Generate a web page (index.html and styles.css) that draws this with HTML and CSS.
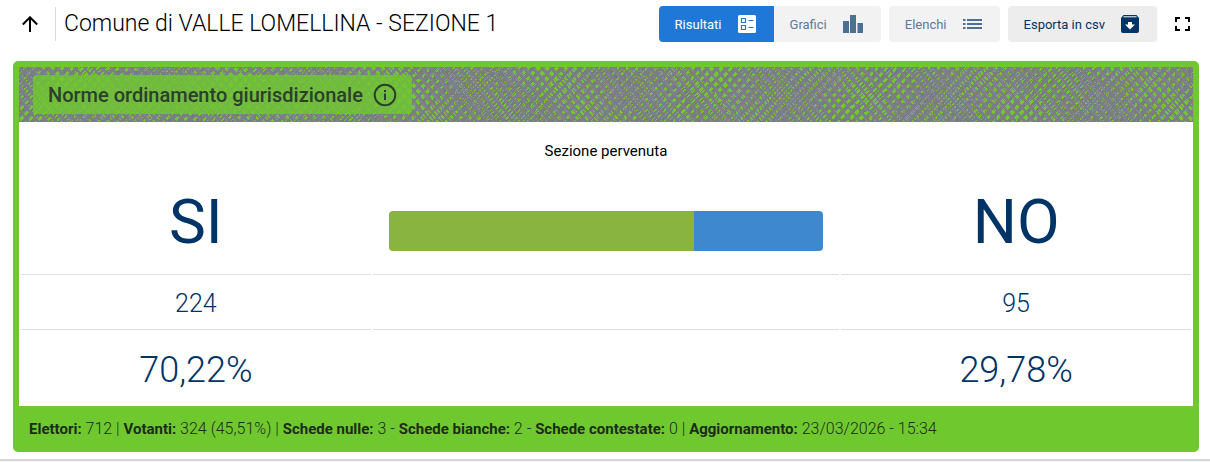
FILE: index.html
```html
<!DOCTYPE html>
<html lang="it">
<head>
    <meta charset="UTF-8">
    <meta name="viewport" content="width=device-width, initial-scale=1.0">
    <title>Comune di VALLE LOMELLINA - SEZIONE 1</title>
    <link rel="stylesheet" href="styles.css">
</head>
<body>

<header class="topbar">
    <a class="back" href="#" aria-label="Torna su">
        <svg width="16" height="16" viewBox="0 0 16 16"><path d="M8 16V1.500M0.800 8.500L8 1.300L15.200 8.500" fill="none" stroke="#000" stroke-width="2"/></svg>
    </a>
    <h1>Comune di VALLE LOMELLINA - SEZIONE 1</h1>
    <div class="actions">
        <div class="tabs">
            <button type="button" class="btn active">Risultati
                <svg width="18" height="18" viewBox="0 0 18 18"><rect width="18" height="18" rx="1.500" fill="#fff"/><path d="M3.500 3.500h4v4h-4zM3.500 10.500h4v4h-4zM10.500 5.500h5M10.500 12.500h5" fill="none" stroke="#1f78d7" stroke-width="1.200"/></svg>
            </button>
            <button type="button" class="btn">Grafici
                <svg width="20" height="18" viewBox="0 0 20 18"><path d="M0 6h6v12H0zM7 0h6v18H7zM14.500 8H20v10h-5.500z" fill="#4c6f94"/></svg>
            </button>
        </div>
        <button type="button" class="btn">Elenchi
            <svg width="19" height="18" viewBox="0 0 19 18"><path d="M0 5h2.500M4 5h15M0 9h2.500M4 9h15M0 13h2.500M4 13h15" stroke="#4c6f94" stroke-width="2"/></svg>
        </button>
        <button type="button" class="btn export">Esporta in csv
            <svg width="18" height="18" viewBox="0 0 18 18"><path d="M2.500 0h13L18 3v13a2 2 0 0 1-2 2H2a2 2 0 0 1-2-2V3z" fill="#003366"/><path d="M2.500 1.800h13" stroke="#fff"/><path d="M7 7h4v2.500h3L9 14.500L4 9.500h3z" fill="#fff"/></svg>
        </button>
        <button type="button" class="fullscreen" aria-label="Schermo intero">
            <svg width="15" height="14" viewBox="0 0 15 14"><path d="M1 5V1h4M10 1h4v4M14 9v4h-4M5 13H1V9" fill="none" stroke="#000" stroke-width="2"/></svg>
        </button>
    </div>
</header>

<main class="card">
    <div class="banner">
        <h2>Norme ordinamento giurisdizionale
            <svg width="24" height="24" viewBox="0 0 24 24"><circle cx="12" cy="12" r="10.300" fill="none" stroke="#2c3e2c" stroke-width="2"/><path d="M12 10.500V17M12 7v2" stroke="#2c3e2c" stroke-width="2"/></svg>
        </h2>
    </div>

    <p class="status">Sezione pervenuta</p>

    <table class="results">
        <colgroup>
            <col class="side">
            <col>
            <col class="side">
        </colgroup>
        <tr class="names">
            <th>SI</th>
            <td>
                <div class="bar">
                    <div class="yes" style="width: 70.22%"></div>
                    <div class="no" style="width: 29.78%"></div>
                </div>
            </td>
            <th>NO</th>
        </tr>
        <tr class="votes">
            <td>224</td>
            <td></td>
            <td>95</td>
        </tr>
        <tr class="percent">
            <td>70,22%</td>
            <td></td>
            <td>29,78%</td>
        </tr>
    </table>

    <p class="summary"><b>Elettori:</b> 712 | <b>Votanti:</b> 324 (45,51%) | <b>Schede nulle:</b> 3 - <b>Schede bianche:</b> 2 - <b>Schede contestate:</b> 0 | <b>Aggiornamento:</b> 23/03/2026 - 15:34</p>
</main>

<div class="page-end"></div>

</body>
</html>
```
FILE: styles.css
```css
* {
    box-sizing: border-box;
}
body {
    font-family: Roboto, 'Liberation Sans', sans-serif;
    margin: 0;
    background-color: #fff;
    color: #000;
}
h1, h2, p {
    margin: 0;
}
svg {
    display: block;
    flex: none;
}
.topbar {
    display: flex;
    align-items: center;
    height: 48px;
    padding: 0 20px 0 22px;
}
.back {
    display: flex;
    align-items: center;
    height: 34px;
    padding-right: 17px;
    border-right: 1px solid #d9dadb;
}
h1 {
    font-size: 23px;
    font-weight: 300;
    line-height: 32px;
    padding-left: 8px;
    white-space: nowrap;
}
.actions {
    display: flex;
    align-items: center;
    gap: 8px;
    margin-left: auto;
}
.tabs {
    display: flex;
    border-radius: 4px;
    overflow: hidden;
}
.btn {
    display: flex;
    align-items: center;
    gap: 16px;
    height: 36px;
    padding: 0 18px 0 16px;
    border: none;
    border-radius: 4px;
    background-color: #f2f2f2;
    color: #5c7a99;
    font-family: inherit;
    font-size: 13px;
    cursor: pointer;
}
.tabs .btn {
    border-radius: 0;
}
.btn.active {
    background-color: #1f78d7;
    color: #fff;
}
.btn.export {
    background-color: #ededed;
    color: #003366;
}
.fullscreen {
    display: flex;
    padding: 0 0 0 10px;
    border: none;
    background: none;
    cursor: pointer;
}
.card {
    margin: 13px 11px 0 13px;
    border: 6px solid #6fc92e;
    border-radius: 5px;
}
.banner {
    display: flex;
    align-items: flex-start;
    height: 55px;
    padding: 8px 14px;
    background-color: #6fc92e;
    background-image:
        repeating-linear-gradient(50deg, #7b7f84 0 2px, transparent 2px 7px),
        repeating-linear-gradient(-46deg, #7b7f84 0 2px, transparent 2px 7px),
        repeating-linear-gradient(54deg, #85858b 0 2px, transparent 2px 7px),
        repeating-linear-gradient(-50deg, #777b80 0 2px, transparent 2px 7px),
        repeating-linear-gradient(47deg, #7f8388 0 1px, transparent 1px 7px),
        repeating-linear-gradient(-43deg, #74787d 0 1px, transparent 1px 7px);
}
h2 {
    display: flex;
    align-items: center;
    gap: 10px;
    height: 39px;
    padding: 0 15px;
    border-radius: 4px;
    background-color: rgba(111, 201, 46, 0.8);
    color: #2c3e2c;
    font-size: 20px;
    font-weight: 500;
}
.status {
    padding-top: 17px;
    font-size: 15px;
    line-height: 24px;
    text-align: center;
}
.results {
    width: 100%;
    table-layout: fixed;
    border-spacing: 2px;
    color: #003366;
    text-align: center;
}
.side {
    width: 30%;
}
.results th,
.results td {
    padding: 0 16px;
    border-bottom: 1px solid #dedfe0;
    font-weight: 400;
}
.results .names th,
.results .names td {
    height: 110px;
    padding-top: 4px;
    font-size: 62px;
}
.results .votes td {
    height: 53px;
    font-size: 25px;
    font-weight: 300;
}
.results .percent td {
    height: 72px;
    padding-top: 4px;
    border-bottom: none;
    font-size: 36px;
    font-weight: 300;
}
.bar {
    display: flex;
    height: 40px;
    margin-top: 18px;
    border-radius: 4px;
    overflow: hidden;
}
.yes {
    background-color: #89b440;
}
.no {
    background-color: #3e88cf;
}
.summary {
    padding: 11px 10px 5px;
    background-color: #6fc92e;
    color: #1d2b1d;
    font-size: 16px;
    font-weight: 300;
    line-height: 24px;
}
.summary b {
    font-size: 15px;
    font-weight: 700;
}
.page-end {
    margin-top: 7px;
    height: 3px;
    border-top: 2px solid #d6d6d4;
    background-color: #f5f4ef;
}
```
